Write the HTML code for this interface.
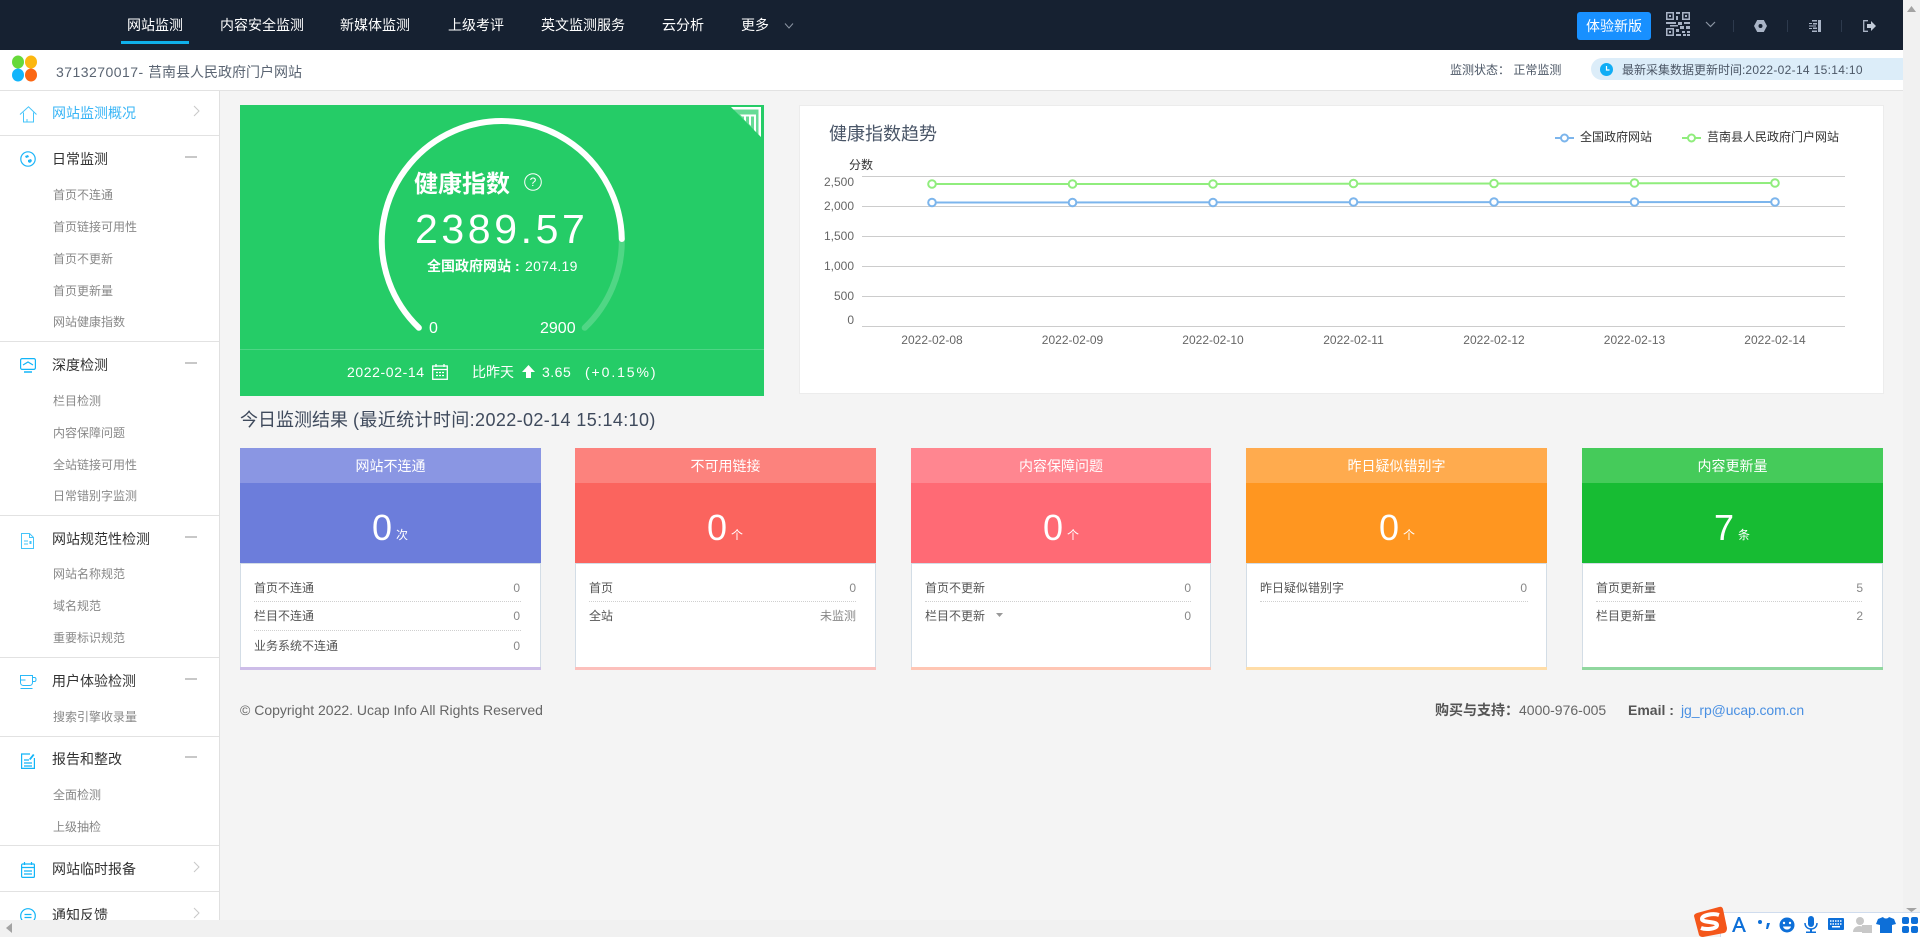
<!DOCTYPE html>
<html lang="zh-CN">
<head>
<meta charset="utf-8">
<title>网站监测</title>
<style>
html,body{margin:0;padding:0;width:1920px;height:937px;overflow:hidden;background:#f4f4f4;font-family:"Liberation Sans","Noto Sans CJK SC",sans-serif;}
.t{position:absolute;white-space:nowrap;line-height:20px;height:20px;}
.b{position:absolute;}
svg{position:absolute;overflow:visible;}
.nav{color:#fff;font-size:14px;top:15px;}
.h{font-size:14px;color:#333;left:52px;}
.s{font-size:12px;color:#888;left:53px;}
.d{position:absolute;left:0;width:219px;height:1px;background:#e2e2e2;}
.m{position:absolute;left:185px;width:12px;height:2px;background:#c8c8c8;}
.ch{font-size:14px;color:#fff;text-align:center;width:301px;}
.n{font-size:36px;color:#fff;line-height:40px;height:40px;}
.u{font-size:12px;color:#fff;}
.l{font-size:12px;color:#555;}
.v{font-size:12px;color:#888;text-align:right;}
.dot{position:absolute;height:0;border-top:1px dotted #cfcfcf;}
.body{position:absolute;top:563px;width:299px;height:104px;background:#fff;border:1px solid #d3dde6;border-bottom:0;}
</style>
</head>
<body>

<!-- top nav -->
<div class="b" style="left:0;top:0;width:1920px;height:50px;background:#162131;"></div>
<div class="b" style="left:121px;top:41px;width:68px;height:3px;background:#0fb0ea;"></div>
<div class="t nav" style="left:127px;">网站监测</div>
<div class="t nav" style="left:220px;">内容安全监测</div>
<div class="t nav" style="left:340px;">新媒体监测</div>
<div class="t nav" style="left:448px;">上级考评</div>
<div class="t nav" style="left:541px;">英文监测服务</div>
<div class="t nav" style="left:662px;">云分析</div>
<div class="t nav" style="left:741px;">更多</div>
<svg style="left:784px;top:22px" width="10" height="8"><path d="M1 1.500L5 6L9 1.500" fill="none" stroke="#8b95a3" stroke-width="1"/></svg>

<div class="b" style="left:1577px;top:12px;width:74px;height:28px;background:#1890ff;border-radius:3px;"></div>
<div class="t" style="left:1577px;top:16px;width:74px;text-align:center;color:#fff;font-size:14px;">体验新版</div>

<!-- QR -->
<svg style="left:1666px;top:12px" width="24" height="24" fill="#a9b4c6">
<path d="M0 0h8v8H0zM1.500 1.500v5h5v-5z" fill-rule="evenodd"/><rect x="3" y="3" width="2" height="2"/>
<path d="M16 0h8v8h-8zM17.500 1.500v5h5v-5z" fill-rule="evenodd"/><rect x="19" y="3" width="2" height="2"/>
<path d="M0 16h8v8H0zM1.500 17.500v5h5v-5z" fill-rule="evenodd"/><rect x="3" y="19" width="2" height="2"/>
<rect x="10" y="0" width="4" height="2"/><rect x="10" y="4" width="2" height="4"/><rect x="0" y="10" width="10" height="2"/><rect x="4" y="13" width="8" height="1.500"/><rect x="12" y="10" width="4" height="3"/><rect x="18" y="10" width="6" height="2"/><rect x="14" y="14" width="4" height="3"/><rect x="20" y="14" width="4" height="3"/><rect x="10" y="17" width="3" height="3"/><rect x="16" y="19" width="3" height="2"/><rect x="21" y="19" width="3" height="2"/><rect x="10" y="22" width="5" height="2"/><rect x="17" y="22" width="3" height="2"/><rect x="21" y="22" width="3" height="2"/>
</svg>
<svg style="left:1705px;top:21px" width="11" height="8"><path d="M1 1l4.500 4.500L10 1" fill="none" stroke="#8b95a3" stroke-width="1.200"/></svg>
<div class="b" style="left:1733px;top:20px;width:1px;height:12px;background:#2d3a4d;"></div>
<div class="b" style="left:1787px;top:20px;width:1px;height:12px;background:#2d3a4d;"></div>
<div class="b" style="left:1841px;top:20px;width:1px;height:12px;background:#2d3a4d;"></div>
<!-- gear -->
<svg style="left:1754px;top:20px" width="13" height="12"><path d="M3.200 0h6.600l3.200 6-3.200 6H3.200L0 6z" fill="#a9b4c6"/><circle cx="6.500" cy="6" r="2" fill="#162131"/></svg>
<!-- collapse -->
<svg style="left:1809px;top:20px" width="12" height="12" fill="#a9b4c6"><rect x="9" y="0" width="3" height="12"/><rect x="3" y="0" width="5" height="1.500"/><rect x="3" y="10.500" width="5" height="1.500"/><rect x="4" y="3" width="4" height="1.500"/><rect x="4" y="7.500" width="4" height="1.500"/><rect x="0" y="3" width="3" height="1"/><rect x="0" y="5.500" width="7" height="1"/><rect x="0" y="8" width="3" height="1"/></svg>
<!-- logout -->
<svg style="left:1863px;top:20px" width="13" height="12"><path d="M5 .7H.7v10.600H5" fill="none" stroke="#a9b4c6" stroke-width="1.300"/><path d="M4 4h4V1l5 5-5 5V8H4z" fill="#c3ccd9"/></svg>

<!-- sub header -->
<div class="b" style="left:0;top:50px;width:1920px;height:40px;background:#fff;"></div>
<div class="b" style="left:0;top:90px;width:1903px;height:1px;background:#e2e2e2;"></div>
<svg style="left:12px;top:56px" width="25" height="25">
<ellipse cx="6" cy="6" rx="6" ry="6.500" fill="#66d93a"/><ellipse cx="19" cy="6" rx="6" ry="6.500" fill="#fcb70f"/>
<ellipse cx="6" cy="19" rx="6" ry="6.500" fill="#12b5fb"/><ellipse cx="19" cy="19" rx="6" ry="6.500" fill="#fb6713"/>
</svg>
<div class="t" style="left:56px;top:62px;font-size:14px;color:#5a6472;"><span style="letter-spacing:.47px">3713270017-&nbsp;</span><span>莒南县人民政府门户网站</span></div>
<div class="t" style="left:1450px;top:60px;font-size:12px;color:#4c5766;">监测状态： 正常监测</div>
<div class="b" style="left:1591px;top:58px;width:312px;height:22px;background:#dcedf9;border-radius:11px 0 0 11px;"></div>
<svg style="left:1600px;top:63px" width="13" height="13"><circle cx="6.500" cy="6.500" r="6.500" fill="#10adf5"/><path d="M6.500 3v4h3" fill="none" stroke="#fff" stroke-width="1.200"/></svg>
<div class="t" style="left:1622px;top:60px;font-size:12px;color:#4c5766;">最新采集数据更新时间:<span style="letter-spacing:.32px">2022-02-14 15:14:10</span></div>

<!-- sidebar -->
<div class="b" style="left:0;top:91px;width:219px;height:846px;background:#fff;border-right:1px solid #e0e0e0;"></div>

<svg style="left:20px;top:106px" width="17" height="17" fill="none" stroke="#45c4fa" stroke-width="1"><path d="M0 8.500L8.500 .8 16.500 8.500M3.500 6.500V16h10V6.500M7 16v-3"/></svg>
<div class="t h" style="top:103px;color:#39b5f6;">网站监测概况</div>
<svg style="left:193px;top:105px" width="7" height="12"><path d="M1 1l5 5-5 5" fill="none" stroke="#c8c8c8"/></svg>
<div class="d" style="top:135px"></div>

<svg style="left:20px;top:151px" width="16" height="16"><circle cx="8" cy="8" r="7.200" fill="none" stroke="#1db5f8" stroke-width="1.200"/><path d="M5 5l3-1 1 2-3 1zM8 9l3-1 1 2-2 2-2-1z" fill="#1db5f8"/></svg>
<div class="t h" style="top:149px;">日常监测</div>
<div class="m" style="top:156px"></div>
<div class="t s" style="top:185px;">首页不连通</div>
<div class="t s" style="top:217px;">首页链接可用性</div>
<div class="t s" style="top:249px;">首页不更新</div>
<div class="t s" style="top:281px;">首页更新量</div>
<div class="t s" style="top:312px;">网站健康指数</div>
<div class="d" style="top:341px"></div>

<svg style="left:20px;top:358px" width="16" height="15" fill="none" stroke="#12b5f8" stroke-width="1.200"><rect x=".6" y=".6" width="14.800" height="10.800" rx="1.500"/><path d="M3 7l5-3 5 3"/><path d="M4 14h8" stroke-width="1.500"/></svg>
<div class="t h" style="top:355px;">深度检测</div>
<div class="m" style="top:362px"></div>
<div class="t s" style="top:391px;">栏目检测</div>
<div class="t s" style="top:423px;">内容保障问题</div>
<div class="t s" style="top:455px;">全站链接可用性</div>
<div class="t s" style="top:486px;">日常错别字监测</div>
<div class="d" style="top:515px"></div>

<svg style="left:21px;top:533px" width="13" height="16" fill="none" stroke="#45c4fa" stroke-width="1"><path d="M.5.500h8l4 4v11H.5zM8.500.500v4h4"/><path d="M3 8h4M3 11h4"/><rect x="8.500" y="8" width="2" height="3" fill="#45c4fa" stroke="none"/></svg>
<div class="t h" style="top:529px;">网站规范性检测</div>
<div class="m" style="top:536px"></div>
<div class="t s" style="top:564px;">网站名称规范</div>
<div class="t s" style="top:596px;">域名规范</div>
<div class="t s" style="top:628px;">重要标识规范</div>
<div class="d" style="top:657px"></div>

<svg style="left:20px;top:675px" width="17" height="14" fill="none" stroke="#2ab9f8" stroke-width="1"><path d="M.5.500h12v7c0 2-1.500 3-3 3h-6c-1.500 0-3-1-3-3zM12.500 2.500h2c2 0 2 4 0 4h-2M.5 13.500h12M.5 5h5"/></svg>
<div class="t h" style="top:671px;">用户体验检测</div>
<div class="m" style="top:678px"></div>
<div class="t s" style="top:707px;">搜索引擎收录量</div>
<div class="d" style="top:736px"></div>

<svg style="left:21px;top:753px" width="14" height="16" fill="none" stroke="#12b5f8" stroke-width="1.200"><path d="M9 1H.6v14.400h12.800V5"/><path d="M3 7h5M3 10h8M3 13h8"/><path d="M8 6l4-5 1.500 1-4 5z" fill="#12b5f8" stroke="none"/></svg>
<div class="t h" style="top:749px;">报告和整改</div>
<div class="m" style="top:756px"></div>
<div class="t s" style="top:785px;">全面检测</div>
<div class="t s" style="top:817px;">上级抽检</div>
<div class="d" style="top:845px"></div>

<svg style="left:21px;top:862px" width="14" height="16" fill="none" stroke="#12b5f8" stroke-width="1.200"><rect x=".6" y="2" width="12.800" height="13.400" rx="1"/><path d="M3.500 0v3M10.500 0v3M.6 5.500h12.800M3 9h8M3 12h8"/></svg>
<div class="t h" style="top:859px;">网站临时报备</div>
<svg style="left:193px;top:861px" width="7" height="12"><path d="M1 1l5 5-5 5" fill="none" stroke="#c8c8c8"/></svg>
<div class="d" style="top:891px"></div>

<svg style="left:20px;top:908px" width="16" height="16" fill="none" stroke="#12b5f8" stroke-width="1.200"><circle cx="8" cy="8" r="7.300"/><path d="M4.500 6.500h7M4.500 9.500h7"/></svg>
<div class="t h" style="top:905px;">通知反馈</div>
<svg style="left:193px;top:907px" width="7" height="12"><path d="M1 1l5 5-5 5" fill="none" stroke="#c8c8c8"/></svg>

<!-- green card -->
<div class="b" style="left:240px;top:105px;width:524px;height:291px;background:#25cc67;"></div>
<svg style="left:731px;top:107px" width="31" height="30">
<path d="M0 0H30V30Z" fill="#fff" opacity=".3"/>
<path d="M0 0H30V30L27.500 27.500V2.500H2.500Z" fill="#fff"/>
<path d="M9 7.500H25V25L23 23V9.500H11Z" fill="#fff"/>
<path d="M13 9h2v5.500l-2-2zM18 9h2v10l-2-2z" fill="#fff"/>
</svg>
<svg style="left:240px;top:105px" width="524" height="291" fill="none" stroke-linecap="round">
<path d="M178.900 222.800 A120 120 0 1 1 381.800 134" stroke="#fff" stroke-width="6"/>
<path d="M381.800 134 A120 120 0 0 1 344.700 222.800" stroke="#fff" stroke-opacity=".2" stroke-width="6"/>
</svg>
<div class="t" style="left:414px;top:167px;height:36px;line-height:36px;font-size:24px;color:#fff;font-weight:bold;">健康指数</div>
<svg style="left:524px;top:173px" width="18" height="18"><circle cx="9" cy="9" r="8.300" fill="none" stroke="#fff" stroke-width="1"/></svg>
<div class="t" style="left:524px;top:173px;width:18px;height:18px;line-height:18px;text-align:center;font-size:12px;color:#fff;">?</div>
<div class="t" style="left:415px;top:204px;height:50px;line-height:50px;font-size:41px;letter-spacing:3.600px;color:#fff;">2389.57</div>
<div class="t" style="left:427px;top:256px;font-size:14px;color:#fff;font-weight:bold;">全国政府网站</div>
<div class="t" style="left:515px;top:256px;font-size:14px;color:#fff;font-weight:bold;">:</div>
<div class="t" style="left:525px;top:256px;font-size:14px;color:#fff;letter-spacing:.3px;">2074.19</div>
<div class="t" style="left:429px;top:319px;font-size:16px;color:#fff;">0</div>
<div class="t" style="left:540px;top:319px;font-size:16px;color:#fff;">2900</div>
<div class="b" style="left:240px;top:349px;width:524px;height:1px;background:#4ed585;"></div>
<div class="t" style="left:347px;top:362px;font-size:14px;color:#fff;letter-spacing:.6px;">2022-02-14</div>
<svg style="left:432px;top:364px" width="16" height="16" fill="none" stroke="#fff" stroke-width="1.300"><rect x=".7" y="2" width="14.600" height="13.300"/><path d="M4 0v3M12 0v3M.7 5.500h14.600"/><path d="M4 8.500h8M4 11.500h8" stroke-dasharray="2 1"/></svg>
<div class="t" style="left:472px;top:362px;font-size:14px;color:#fff;">比昨天</div>
<svg style="left:522px;top:365px" width="13" height="13"><path d="M6.500 0L13 7H9v6H4V7H0z" fill="#fff"/></svg>
<div class="t" style="left:542px;top:362px;font-size:14px;color:#fff;letter-spacing:.5px;">3.65</div>
<div class="t" style="left:585px;top:362px;font-size:14px;color:#fff;letter-spacing:1.900px;">(+0.15%)</div>

<!-- chart card -->
<div class="b" style="left:799px;top:105px;width:1083px;height:287px;background:#fff;border:1px solid #ececec;"></div>
<div class="t" style="left:829px;top:124px;font-size:18px;color:#4a5668;">健康指数趋势</div>
<svg style="left:0;top:0" width="1920" height="937" font-family="Liberation Sans,Noto Sans CJK SC,sans-serif" font-size="12">
<g stroke="#cccccc" stroke-width="1">
<path d="M862 176.500H1845M862 206.500H1845M862 236.500H1845M862 266.500H1845M862 296.500H1845M862 326.500H1845"/>
</g>
<g fill="#666" text-anchor="end">
<text x="854" y="186">2,500</text><text x="854" y="210">2,000</text><text x="854" y="240">1,500</text><text x="854" y="270">1,000</text><text x="854" y="300">500</text><text x="854" y="324">0</text>
</g>
<text x="849" y="169" fill="#333">分数</text>
<g fill="#666" text-anchor="middle">
<text x="932" y="344">2022-02-08</text><text x="1072.500" y="344">2022-02-09</text><text x="1213" y="344">2022-02-10</text><text x="1353.500" y="344">2022-02-11</text><text x="1494" y="344">2022-02-12</text><text x="1634.500" y="344">2022-02-13</text><text x="1775" y="344">2022-02-14</text>
</g>
<path d="M932 202.500L1775 202" fill="none" stroke="#7cb5ec" stroke-width="2"/>
<path d="M932 184L1213 184 1775 183" fill="none" stroke="#90ed7d" stroke-width="2"/>
<g fill="#fff" stroke="#7cb5ec" stroke-width="2">
<circle cx="932" cy="202.500" r="3.800"/><circle cx="1072.500" cy="202.500" r="3.800"/><circle cx="1213" cy="202.500" r="3.800"/><circle cx="1353.500" cy="202" r="3.800"/><circle cx="1494" cy="202" r="3.800"/><circle cx="1634.500" cy="202" r="3.800"/><circle cx="1775" cy="202" r="3.800"/>
</g>
<g fill="#fff" stroke="#90ed7d" stroke-width="2">
<circle cx="932" cy="184" r="3.800"/><circle cx="1072.500" cy="184" r="3.800"/><circle cx="1213" cy="184" r="3.800"/><circle cx="1353.500" cy="183.500" r="3.800"/><circle cx="1494" cy="183.500" r="3.800"/><circle cx="1634.500" cy="183" r="3.800"/><circle cx="1775" cy="183" r="3.800"/>
</g>
<path d="M1555 138H1574" stroke="#7cb5ec" stroke-width="2"/>
<circle cx="1564.500" cy="138" r="3.500" fill="#fff" stroke="#7cb5ec" stroke-width="2"/>
<path d="M1682 138H1701" stroke="#90ed7d" stroke-width="2"/>
<circle cx="1691.500" cy="138" r="3.500" fill="#fff" stroke="#90ed7d" stroke-width="2"/>
<text x="1580" y="141" fill="#333">全国政府网站</text>
<text x="1707" y="141" fill="#333">莒南县人民政府门户网站</text>
</svg>

<!-- title -->
<div class="t" style="left:240px;top:410px;font-size:18px;color:#3f4a5c;">今日监测结果 <span style="letter-spacing:.38px">(最近统计时间:2022-02-14 15:14:10)</span></div>

<!-- card 1 -->
<div class="b" style="left:240px;top:448px;width:301px;height:35px;background:#8a96e3;"></div>
<div class="b" style="left:240px;top:483px;width:301px;height:80px;background:#6c7ddb;"></div>
<div class="body" style="left:240px;"></div>
<div class="b" style="left:240px;top:667px;width:301px;height:3px;background:#cdbde8;"></div>
<div class="t ch" style="left:240px;top:456px;">网站不连通</div>
<div class="t n" style="left:372px;top:508px;">0</div><div class="t u" style="left:396px;top:525px;">次</div>
<div class="t l" style="left:254px;top:578px;">首页不连通</div><div class="t v" style="left:500px;top:578px;width:20px;">0</div>
<div class="dot" style="left:254px;top:601px;width:267px;"></div>
<div class="t l" style="left:254px;top:606px;">栏目不连通</div><div class="t v" style="left:500px;top:606px;width:20px;">0</div>
<div class="dot" style="left:254px;top:630px;width:267px;"></div>
<div class="t l" style="left:254px;top:636px;">业务系统不连通</div><div class="t v" style="left:500px;top:636px;width:20px;">0</div>

<!-- card 2 -->
<div class="b" style="left:575px;top:448px;width:301px;height:35px;background:#fc827d;"></div>
<div class="b" style="left:575px;top:483px;width:301px;height:80px;background:#fb645e;"></div>
<div class="body" style="left:575px;"></div>
<div class="b" style="left:575px;top:667px;width:301px;height:3px;background:#fcc0bc;"></div>
<div class="t ch" style="left:575px;top:456px;">不可用链接</div>
<div class="t n" style="left:707px;top:508px;">0</div><div class="t u" style="left:731px;top:525px;">个</div>
<div class="t l" style="left:589px;top:578px;">首页</div><div class="t v" style="left:836px;top:578px;width:20px;">0</div>
<div class="dot" style="left:589px;top:601px;width:267px;"></div>
<div class="t l" style="left:589px;top:606px;">全站</div><div class="t v" style="left:796px;top:606px;width:60px;">未监测</div>

<!-- card 3 -->
<div class="b" style="left:911px;top:448px;width:300px;height:35px;background:#ff8690;"></div>
<div class="b" style="left:911px;top:483px;width:300px;height:80px;background:#ff6a75;"></div>
<div class="body" style="left:911px;width:298px;"></div>
<div class="b" style="left:911px;top:667px;width:300px;height:3px;background:#ffc6b4;"></div>
<div class="t ch" style="left:911px;top:456px;width:300px;">内容保障问题</div>
<div class="t n" style="left:1043px;top:508px;">0</div><div class="t u" style="left:1067px;top:525px;">个</div>
<div class="t l" style="left:925px;top:578px;">首页不更新</div><div class="t v" style="left:1171px;top:578px;width:20px;">0</div>
<div class="dot" style="left:925px;top:601px;width:266px;"></div>
<div class="t l" style="left:925px;top:606px;">栏目不更新</div><div class="t v" style="left:1171px;top:606px;width:20px;">0</div>
<svg style="left:996px;top:613px" width="7" height="5"><path d="M0 0h7L3.500 4z" fill="#999"/></svg>

<!-- card 4 -->
<div class="b" style="left:1246px;top:448px;width:301px;height:35px;background:#ffab4e;"></div>
<div class="b" style="left:1246px;top:483px;width:301px;height:80px;background:#ff9620;"></div>
<div class="body" style="left:1246px;"></div>
<div class="b" style="left:1246px;top:667px;width:301px;height:3px;background:#ffdda8;"></div>
<div class="t ch" style="left:1246px;top:456px;">昨日疑似错别字</div>
<div class="t n" style="left:1379px;top:508px;">0</div><div class="t u" style="left:1403px;top:525px;">个</div>
<div class="t l" style="left:1260px;top:578px;">昨日疑似错别字</div><div class="t v" style="left:1507px;top:578px;width:20px;">0</div>
<div class="dot" style="left:1260px;top:601px;width:268px;"></div>

<!-- card 5 -->
<div class="b" style="left:1582px;top:448px;width:301px;height:35px;background:#45cb5a;"></div>
<div class="b" style="left:1582px;top:483px;width:301px;height:80px;background:#17bc33;"></div>
<div class="body" style="left:1582px;"></div>
<div class="b" style="left:1582px;top:667px;width:301px;height:3px;background:#90d79f;"></div>
<div class="t ch" style="left:1582px;top:456px;">内容更新量</div>
<div class="t n" style="left:1714px;top:508px;">7</div><div class="t u" style="left:1738px;top:525px;">条</div>
<div class="t l" style="left:1596px;top:578px;">首页更新量</div><div class="t v" style="left:1843px;top:578px;width:20px;">5</div>
<div class="dot" style="left:1596px;top:601px;width:266px;"></div>
<div class="t l" style="left:1596px;top:606px;">栏目更新量</div><div class="t v" style="left:1843px;top:606px;width:20px;">2</div>

<!-- footer -->
<div class="t" style="left:240px;top:700px;font-size:14px;color:#666;">© Copyright 2022. Ucap Info All Rights Reserved</div>
<div class="t" style="left:1435px;top:700px;font-size:14px;color:#555;font-weight:bold;">购买与支持：</div>
<div class="t" style="left:1519px;top:700px;font-size:14px;color:#666;">4000-976-005</div>
<div class="t" style="left:1628px;top:700px;font-size:14px;color:#555;font-weight:bold;">Email :</div>
<div class="t" style="left:1681px;top:700px;font-size:14px;color:#4a90e2;letter-spacing:-.1px;">jg_rp@ucap.com.cn</div>

<!-- scrollbars -->
<div class="b" style="left:1903px;top:0;width:17px;height:937px;background:#f1f1f1;"></div>
<svg style="left:1906px;top:6px" width="11" height="7"><path d="M5.500 0L10 6H1z" fill="#a3a3a3"/></svg>
<div class="b" style="left:0;top:920px;width:1903px;height:17px;background:#f1f1f1;"></div>
<svg style="left:6px;top:923px" width="7" height="11"><path d="M6 0v10L0 5z" fill="#a3a3a3"/></svg>
<svg style="left:1906px;top:908px" width="11" height="4"><path d="M0 0h11L5.500 4z" fill="#a3a3a3"/></svg>

<!-- IME toolbar -->
<div class="b" style="left:1720px;top:912px;width:200px;height:25px;background:#fff;border-top:1px solid #cfdcee;border-left:1px solid #cfdcee;box-sizing:border-box;"></div>
<svg style="left:1694px;top:906px" width="33" height="31">
<path d="M3 7L25 1Q28 0 29 3L33 22Q33 26 30 27L9 31Q6 31 5 29L0 10Q0 8 3 7Z" fill="#f4561a"/>
<path d="M25 9C19 7 8 9 8 13C8 17 23 15 23 19C23 23 12 24 7 22" fill="none" stroke="#fff" stroke-width="4"/>
</svg>
<svg style="left:1730px;top:916px" width="190" height="21" fill="#0d6fd8">
<path d="M2 16L8 1h2l6 15h-2.500l-1.500-4H6l-1.500 4zM6.800 10h4.400L9 4z"/>
<circle cx="30" cy="6" r="2"/><path d="M37 7h3l-2 6h-2z"/>
<circle cx="57" cy="9" r="7.500"/><circle cx="54" cy="7" r="1.200" fill="#fff"/><circle cx="60" cy="7" r="1.200" fill="#fff"/><path d="M53 10.500h8c-1 4-7 4-8 0z" fill="#fff"/>
<rect x="78" y="0" width="6" height="11" rx="3"/><path d="M75 7c0 8 12 8 12 0" fill="none" stroke="#0d6fd8" stroke-width="1.500"/><rect x="80" y="13" width="2" height="3"/><rect x="76" y="15.500" width="10" height="1.500"/>
<rect x="98" y="2" width="16" height="12" rx="1"/><path d="M100 5h12M100 8h12" stroke="#fff" stroke-width="1.500" stroke-dasharray="1.500 1"/><rect x="102" y="10" width="8" height="1.500" fill="#fff"/>
<circle cx="130" cy="5" r="4" fill="#c8c8c8"/><path d="M123 16c0-8 13-8 13 0z" fill="#c8c8c8"/><rect x="132" y="9" width="10" height="8" fill="#c8c8c8"/>
<path d="M148 3l5-2c1 2 5 2 6 0l5 2 2 5-4 1v8h-12V9l-4-1z"/>
<rect x="172" y="1" width="7" height="7" rx="2"/><rect x="181" y="1" width="7" height="7" rx="2"/><rect x="172" y="10" width="7" height="7" rx="2"/><rect x="181" y="10" width="7" height="7" rx="2"/>
</svg>

</body>
</html>
